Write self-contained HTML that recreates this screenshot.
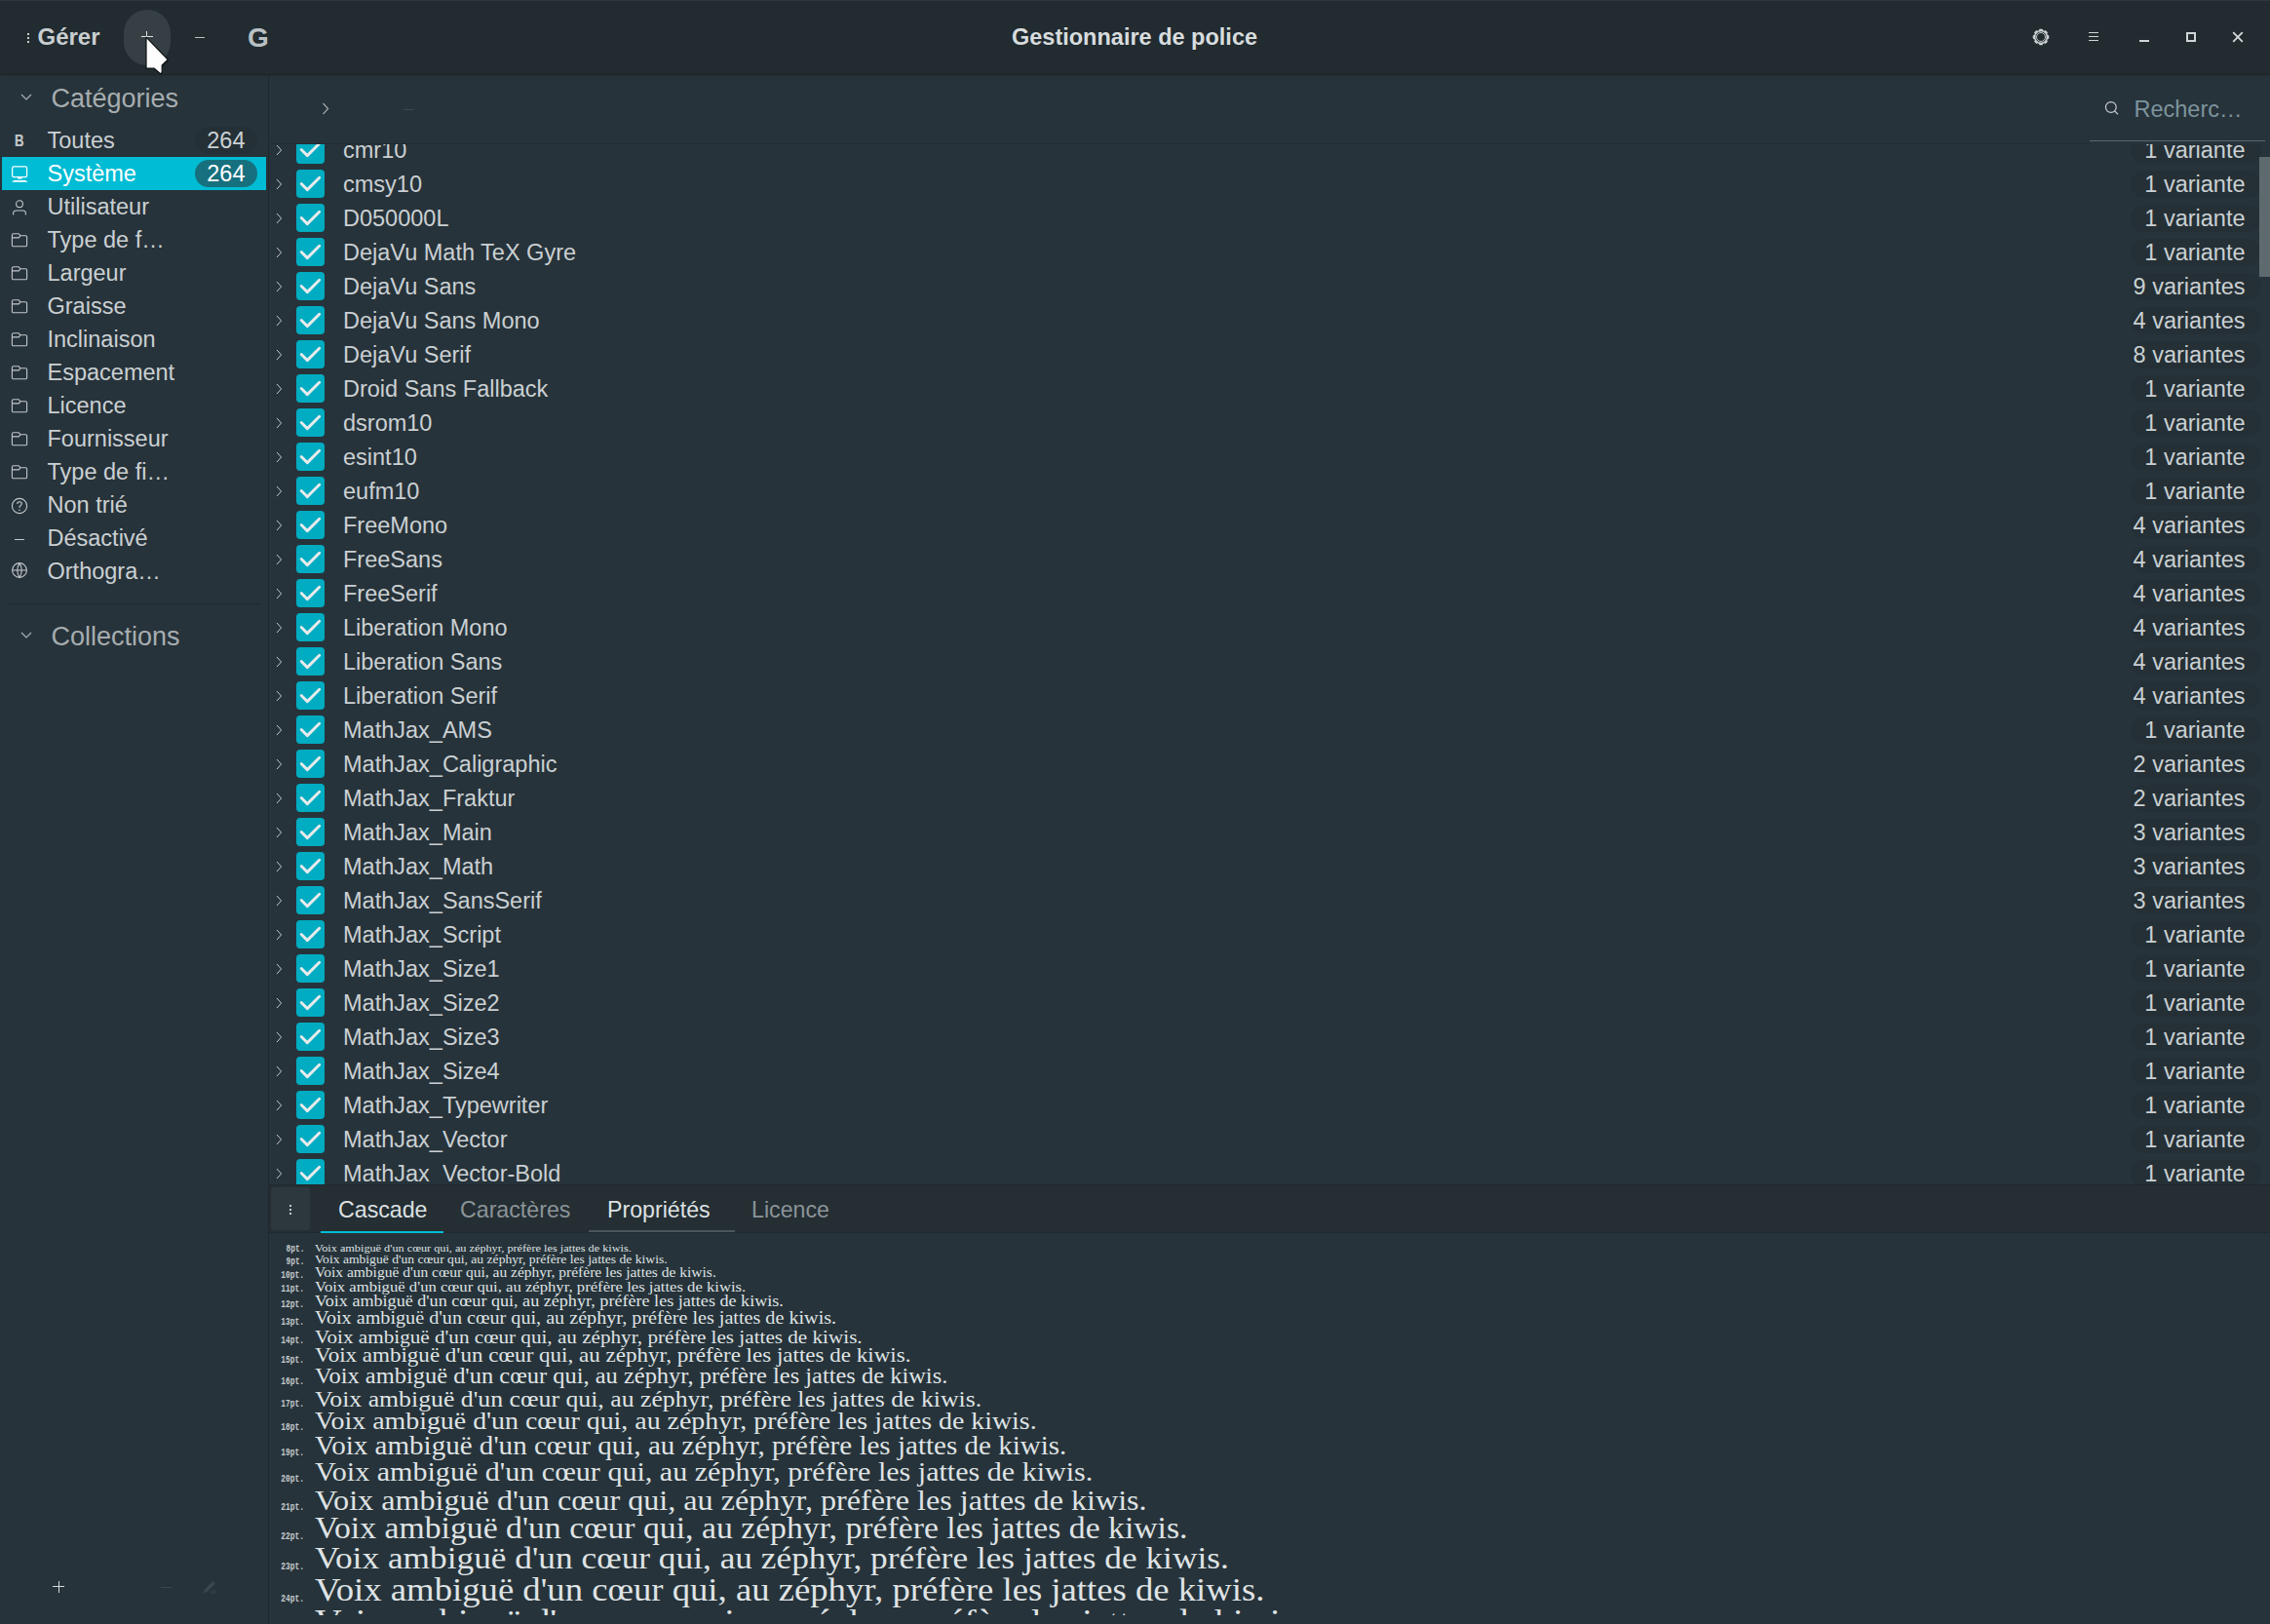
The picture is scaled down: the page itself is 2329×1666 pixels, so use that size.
<!DOCTYPE html>
<html><head><meta charset="utf-8"><title>Gestionnaire de police</title>
<style>
html,body{margin:0;padding:0;}
body{width:2329px;height:1666px;overflow:hidden;position:relative;background:#27333a;font-family:"Liberation Sans",sans-serif;}
.abs{position:absolute;}
.t{position:absolute;white-space:nowrap;}
.cb{width:29px;height:29px;border-radius:4px;background:#00acc1;}
.cb svg{display:block}
.pv{font-family:"Liberation Serif",serif;color:#dfe3e5;transform-origin:left;}
.lb{font-family:"Liberation Mono",monospace;font-size:11px;line-height:14px;color:#c3c9cc;font-weight:bold;transform:scaleX(0.72);transform-origin:right;}
</style></head><body>
<div class="abs" style="left:0;top:0;width:2329px;height:76px;background:#212b30"></div>
<div class="abs" style="left:0;top:0;width:2329px;height:1px;background:#2c363b"></div>
<div class="abs" style="left:0;top:76px;width:2329px;height:1px;background:#1d2529;box-shadow:0 1px 2px rgba(0,0,0,0.18)"></div>
<div class="abs" style="left:28px;top:34px;width:2px;height:2px;background:#c9cdd0"></div>
<div class="abs" style="left:28px;top:38px;width:2px;height:2px;background:#c9cdd0"></div>
<div class="abs" style="left:28px;top:42px;width:2px;height:2px;background:#c9cdd0"></div>
<div class="t " style="left:38.50px;top:21.18px;font-size:24px;line-height:34px;color:#c9ced1;font-family:'Liberation Sans';font-weight:bold;">Gérer</div>
<div class="abs" style="left:127px;top:10px;width:48px;height:57px;border-radius:24px;background:#353f44"></div>
<div class="abs" style="left:145px;top:37px;width:12px;height:1px;background:#e0e3e5"></div>
<div class="abs" style="left:150px;top:32px;width:1px;height:12px;background:#e0e3e5"></div>
<div class="abs" style="left:200px;top:38px;width:10px;height:1px;background:#b8bec1"></div>
<div class="t " style="left:254.00px;top:19.29px;font-size:28px;line-height:39px;color:#b9c0c4;font-family:'Liberation Sans';font-weight:bold;">G</div>
<div class="t " style="left:1164.00px;transform:translateX(-50%);top:21.65px;font-size:23.5px;line-height:33px;color:#d8dcde;font-family:'Liberation Sans';font-weight:bold;">Gestionnaire de police</div>
<svg class="abs" style="left:2084px;top:28px" width="20" height="20" viewBox="0 0 20 20"><path d="M8.10 3.37 L8.59 2.02 L11.41 2.02 L11.90 3.37 L13.35 3.97 L14.65 3.36 L16.64 5.35 L16.03 6.65 L16.63 8.10 L17.98 8.59 L17.98 11.41 L16.63 11.90 L16.03 13.35 L16.64 14.65 L14.65 16.64 L13.35 16.03 L11.90 16.63 L11.41 17.98 L8.59 17.98 L8.10 16.63 L6.65 16.03 L5.35 16.64 L3.36 14.65 L3.97 13.35 L3.37 11.90 L2.02 11.41 L2.02 8.59 L3.37 8.10 L3.97 6.65 L3.36 5.35 L5.35 3.36 L6.65 3.97 Z M10 4.1 A5.9 5.9 0 1 0 10 15.9 A5.9 5.9 0 1 0 10 4.1 Z" fill="#cdd2d5" fill-rule="evenodd" stroke="#cdd2d5" stroke-width="0.6" stroke-linejoin="round"/><circle cx="10" cy="10" r="4.5" fill="none" stroke="#cdd2d5" stroke-width="0.9"/></svg>
<div class="abs" style="left:2143px;top:33px;width:10px;height:1px;background:#cfd3d5"></div>
<div class="abs" style="left:2143px;top:37px;width:10px;height:1px;background:#cfd3d5"></div>
<div class="abs" style="left:2143px;top:41px;width:10px;height:1px;background:#cfd3d5"></div>
<div class="abs" style="left:2195px;top:41px;width:10px;height:2px;background:#d0d4d6"></div>
<div class="abs" style="left:2243px;top:33px;width:6px;height:6px;border:2px solid #d0d4d6"></div>
<svg class="abs" style="left:2290px;top:32px" width="12" height="12" viewBox="0 0 12 12"><path d="M1.2 1.2 L10.8 10.8 M10.8 1.2 L1.2 10.8" stroke="#d6dadc" stroke-width="1.8"/></svg>
<svg class="abs" style="left:146px;top:34px" width="30" height="46" viewBox="0 0 30 46"><path d="M4 4.2 L4 36 L12 36 L18.6 41.8 L20.2 40.4 L20.2 33 L26.2 27.2 Z" fill="#000" opacity="0.25" transform="translate(0.8,1.2)"/><path d="M4 4.2 L4 36 L12 36 L18.6 41.8 L20.2 40.4 L20.2 33 L26.2 27.2 Z" fill="#fdfdfd" stroke="#0d1214" stroke-width="1.2" stroke-linejoin="round"/></svg>
<div class="abs" style="left:275px;top:77px;width:1px;height:1589px;background:#1f292d"></div>
<svg class="abs" style="left:21px;top:96px" width="12" height="8" viewBox="0 0 12 8"><path d="M1 1 L6 6 L11 1" fill="none" stroke="#a9b0b3" stroke-width="1.2"/></svg>
<div class="t " style="left:52.50px;top:81.64px;font-size:27px;line-height:38px;color:#a6adb0;font-family:'Liberation Sans';font-weight:normal;">Catégories</div>
<div class="t " style="left:48.50px;top:128.15px;font-size:23.5px;line-height:33px;color:#cad0d3;font-family:'Liberation Sans';font-weight:normal;">Toutes</div>
<div class="abs" style="left:200px;top:130px;width:64px;height:28px;border-radius:14px;background:#253036"></div>
<div class="t " style="right:2077.50px;top:128.15px;font-size:23.5px;line-height:33px;color:#cad0d3;font-family:'Liberation Sans';font-weight:normal;">264</div>
<div class="t " style="left:14.60px;top:132.78px;font-size:16.5px;line-height:23px;color:#c3c8cb;font-family:'Liberation Sans';font-weight:bold;transform:scaleX(0.8);transform-origin:left;-webkit-text-stroke:0.2px #c3c8cb;">B</div>
<div class="abs" style="left:2px;top:161px;width:271px;height:34px;background:#00bcd4"></div>
<div class="abs" style="left:200px;top:164px;width:64px;height:28px;border-radius:14px;background:#17707e"></div>
<div class="t " style="left:48.50px;top:162.15px;font-size:23.5px;line-height:33px;color:#ffffff;font-family:'Liberation Sans';font-weight:normal;">Système</div>
<div class="t " style="right:2077.50px;top:162.15px;font-size:23.5px;line-height:33px;color:#ffffff;font-family:'Liberation Sans';font-weight:normal;">264</div>
<svg class="abs" style="left:11px;top:167.8px" width="19" height="20" viewBox="0 0 19 20"><g fill="none" stroke="#ffffff" stroke-width="1.2"><rect x="1.6" y="2.9" width="15" height="10.8" rx="1.6"/></g><rect x="7" y="14.2" width="4.6" height="1.4" fill="#fff"/><path d="M1.2 18.8 Q2 17 4 17 H14.6 Q16.6 17 17.4 18.8 Z" fill="#fff"/></svg>
<div class="t " style="left:48.50px;top:196.15px;font-size:23.5px;line-height:33px;color:#cad0d3;font-family:'Liberation Sans';font-weight:normal;">Utilisateur</div>
<svg class="abs" style="left:12px;top:204.60000000000002px" width="16" height="18" viewBox="0 0 16 18"><g fill="none" stroke="#c3c8cb" stroke-width="1.1" stroke-linecap="round"><circle cx="8" cy="4.2" r="3.4"/><path d="M1.6 15 V13.9 Q1.6 11 5 11 H11 Q14.4 11 14.4 13.9 V15"/></g></svg>
<div class="t " style="left:48.50px;top:230.15px;font-size:23.5px;line-height:33px;color:#cad0d3;font-family:'Liberation Sans';font-weight:normal;">Type de f…</div>
<svg class="abs" style="left:11px;top:238.60000000000002px" width="18" height="16" viewBox="0 0 18 16"><path d="M1.4 2.1 Q1.4 0.7 2.8 0.7 H7.9 L9.9 2.7 H15.2 Q16.6 2.7 16.6 4.1 V12.4 Q16.6 13.8 15.2 13.8 H2.8 Q1.4 13.8 1.4 12.4 Z M1.4 4.9 H8.3 L9.9 2.9" fill="none" stroke="#c3c8cb" stroke-width="1.1" stroke-linejoin="round"/></svg>
<div class="t " style="left:48.50px;top:264.15px;font-size:23.5px;line-height:33px;color:#cad0d3;font-family:'Liberation Sans';font-weight:normal;">Largeur</div>
<svg class="abs" style="left:11px;top:272.6px" width="18" height="16" viewBox="0 0 18 16"><path d="M1.4 2.1 Q1.4 0.7 2.8 0.7 H7.9 L9.9 2.7 H15.2 Q16.6 2.7 16.6 4.1 V12.4 Q16.6 13.8 15.2 13.8 H2.8 Q1.4 13.8 1.4 12.4 Z M1.4 4.9 H8.3 L9.9 2.9" fill="none" stroke="#c3c8cb" stroke-width="1.1" stroke-linejoin="round"/></svg>
<div class="t " style="left:48.50px;top:298.15px;font-size:23.5px;line-height:33px;color:#cad0d3;font-family:'Liberation Sans';font-weight:normal;">Graisse</div>
<svg class="abs" style="left:11px;top:306.6px" width="18" height="16" viewBox="0 0 18 16"><path d="M1.4 2.1 Q1.4 0.7 2.8 0.7 H7.9 L9.9 2.7 H15.2 Q16.6 2.7 16.6 4.1 V12.4 Q16.6 13.8 15.2 13.8 H2.8 Q1.4 13.8 1.4 12.4 Z M1.4 4.9 H8.3 L9.9 2.9" fill="none" stroke="#c3c8cb" stroke-width="1.1" stroke-linejoin="round"/></svg>
<div class="t " style="left:48.50px;top:332.15px;font-size:23.5px;line-height:33px;color:#cad0d3;font-family:'Liberation Sans';font-weight:normal;">Inclinaison</div>
<svg class="abs" style="left:11px;top:340.6px" width="18" height="16" viewBox="0 0 18 16"><path d="M1.4 2.1 Q1.4 0.7 2.8 0.7 H7.9 L9.9 2.7 H15.2 Q16.6 2.7 16.6 4.1 V12.4 Q16.6 13.8 15.2 13.8 H2.8 Q1.4 13.8 1.4 12.4 Z M1.4 4.9 H8.3 L9.9 2.9" fill="none" stroke="#c3c8cb" stroke-width="1.1" stroke-linejoin="round"/></svg>
<div class="t " style="left:48.50px;top:366.15px;font-size:23.5px;line-height:33px;color:#cad0d3;font-family:'Liberation Sans';font-weight:normal;">Espacement</div>
<svg class="abs" style="left:11px;top:374.6px" width="18" height="16" viewBox="0 0 18 16"><path d="M1.4 2.1 Q1.4 0.7 2.8 0.7 H7.9 L9.9 2.7 H15.2 Q16.6 2.7 16.6 4.1 V12.4 Q16.6 13.8 15.2 13.8 H2.8 Q1.4 13.8 1.4 12.4 Z M1.4 4.9 H8.3 L9.9 2.9" fill="none" stroke="#c3c8cb" stroke-width="1.1" stroke-linejoin="round"/></svg>
<div class="t " style="left:48.50px;top:400.15px;font-size:23.5px;line-height:33px;color:#cad0d3;font-family:'Liberation Sans';font-weight:normal;">Licence</div>
<svg class="abs" style="left:11px;top:408.6px" width="18" height="16" viewBox="0 0 18 16"><path d="M1.4 2.1 Q1.4 0.7 2.8 0.7 H7.9 L9.9 2.7 H15.2 Q16.6 2.7 16.6 4.1 V12.4 Q16.6 13.8 15.2 13.8 H2.8 Q1.4 13.8 1.4 12.4 Z M1.4 4.9 H8.3 L9.9 2.9" fill="none" stroke="#c3c8cb" stroke-width="1.1" stroke-linejoin="round"/></svg>
<div class="t " style="left:48.50px;top:434.15px;font-size:23.5px;line-height:33px;color:#cad0d3;font-family:'Liberation Sans';font-weight:normal;">Fournisseur</div>
<svg class="abs" style="left:11px;top:442.6px" width="18" height="16" viewBox="0 0 18 16"><path d="M1.4 2.1 Q1.4 0.7 2.8 0.7 H7.9 L9.9 2.7 H15.2 Q16.6 2.7 16.6 4.1 V12.4 Q16.6 13.8 15.2 13.8 H2.8 Q1.4 13.8 1.4 12.4 Z M1.4 4.9 H8.3 L9.9 2.9" fill="none" stroke="#c3c8cb" stroke-width="1.1" stroke-linejoin="round"/></svg>
<div class="t " style="left:48.50px;top:468.15px;font-size:23.5px;line-height:33px;color:#cad0d3;font-family:'Liberation Sans';font-weight:normal;">Type de fi…</div>
<svg class="abs" style="left:11px;top:476.6px" width="18" height="16" viewBox="0 0 18 16"><path d="M1.4 2.1 Q1.4 0.7 2.8 0.7 H7.9 L9.9 2.7 H15.2 Q16.6 2.7 16.6 4.1 V12.4 Q16.6 13.8 15.2 13.8 H2.8 Q1.4 13.8 1.4 12.4 Z M1.4 4.9 H8.3 L9.9 2.9" fill="none" stroke="#c3c8cb" stroke-width="1.1" stroke-linejoin="round"/></svg>
<div class="t " style="left:48.50px;top:502.15px;font-size:23.5px;line-height:33px;color:#cad0d3;font-family:'Liberation Sans';font-weight:normal;">Non trié</div>
<svg class="abs" style="left:11px;top:509.79999999999995px" width="18" height="18" viewBox="0 0 18 18"><g fill="none" stroke="#c3c8cb" stroke-width="1.1"><circle cx="9" cy="9" r="7.6"/><path d="M6.7 7 Q6.8 4.7 9 4.7 Q11.3 4.7 11.3 6.8 Q11.3 8.2 9.4 9.2 Q9 9.5 9 11"/></g><circle cx="9" cy="13.2" r="0.8" fill="#c3c8cb"/></svg>
<div class="t " style="left:48.50px;top:536.15px;font-size:23.5px;line-height:33px;color:#cad0d3;font-family:'Liberation Sans';font-weight:normal;">Désactivé</div>
<div class="abs" style="left:15px;top:552.8px;width:10px;height:1px;background:#c3c8cb"></div>
<div class="t " style="left:48.50px;top:570.15px;font-size:23.5px;line-height:33px;color:#cad0d3;font-family:'Liberation Sans';font-weight:normal;">Orthogra…</div>
<svg class="abs" style="left:11px;top:576.4px" width="18" height="18" viewBox="0 0 18 18"><g fill="none" stroke="#c3c8cb" stroke-width="1.1"><circle cx="9" cy="9" r="7.4"/><path d="M9 1.6 Q4.6 9 9 16.4 Q13.4 9 9 1.6 M1.6 9 H16.4"/></g></svg>
<div class="abs" style="left:8px;top:619px;width:259px;height:1px;background:#1f292d"></div>
<svg class="abs" style="left:21px;top:648px" width="12" height="8" viewBox="0 0 12 8"><path d="M1 1 L6 6 L11 1" fill="none" stroke="#a9b0b3" stroke-width="1.2"/></svg>
<div class="t " style="left:52.50px;top:633.64px;font-size:27px;line-height:38px;color:#a6adb0;font-family:'Liberation Sans';font-weight:normal;">Collections</div>
<div class="abs" style="left:54px;top:1627px;width:12px;height:1px;background:#d5d9db"></div>
<div class="abs" style="left:59.5px;top:1622px;width:1px;height:12px;background:#d5d9db"></div>
<div class="abs" style="left:165px;top:1628px;width:11px;height:1px;background:#3b474d"></div>
<svg class="abs" style="left:207px;top:1620px" width="16" height="16" viewBox="0 0 16 16"><path d="M1.5 14.5 L3 10.5 L11.5 2 L14 4.5 L5.5 13 Z" fill="#3b474d"/><path d="M9 14 H15 M10.5 12 H15" stroke="#3b474d" stroke-width="1"/></svg>
<svg class="abs" style="left:330px;top:105px" width="8" height="13" viewBox="0 0 8 13"><path d="M1.5 1 L6.5 6.5 L1.5 12" fill="none" stroke="#c3c8cb" stroke-width="1.1"/></svg>
<div class="abs" style="left:414px;top:112px;width:10px;height:1px;background:#3d494f"></div>
<svg class="abs" style="left:2159px;top:103px" width="16" height="16" viewBox="0 0 16 16"><g fill="none" stroke="#c9ced1" stroke-width="1.2"><circle cx="6.8" cy="7" r="5.4"/><path d="M10.6 10.9 L14 14.2"/></g></svg>
<div class="t " style="left:2189.50px;top:96.15px;font-size:23.5px;line-height:33px;color:#7d939d;font-family:'Liberation Sans';font-weight:normal;">Recherc…</div>
<div class="abs" style="left:2144px;top:144px;width:180px;height:1px;background:#5b676d"></div>
<div class="abs" style="left:276px;top:147px;width:1868px;height:1px;background:#222c31"></div>
<div class="abs" style="left:276px;top:148px;width:2053px;height:1068px;overflow:hidden"><svg class="abs" style="left:7.300000000000011px;top:0px" width="7" height="12" viewBox="0 0 7 12"><path d="M1 1 L5.6 6 L1 11" fill="none" stroke="#c3c8cb" stroke-width="1"/></svg>
<div class="abs cb" style="left:28px;top:-9px"><svg width="29" height="29" viewBox="0 0 29 29"><path d="M5.2 14.5 L11.3 20.6 L23.7 8.2" fill="none" stroke="#e9ebec" stroke-width="2.9" stroke-linecap="round" stroke-linejoin="round"/></svg></div>
<div class="t " style="left:76.00px;top:-10.15px;font-size:23.5px;line-height:33px;color:#cad0d3;font-family:'Liberation Sans';font-weight:normal;">cmr10</div>
<div class="abs" style="left:1910px;top:-8.5px;width:134px;height:28px;border-radius:14px;background:#253036"></div>
<div class="t" style="right:25.50px;top:-10.15px;font-size:23.5px;line-height:33px;color:#cad0d3">1 variante</div>
<svg class="abs" style="left:7.300000000000011px;top:35px" width="7" height="12" viewBox="0 0 7 12"><path d="M1 1 L5.6 6 L1 11" fill="none" stroke="#c3c8cb" stroke-width="1"/></svg>
<div class="abs cb" style="left:28px;top:26px"><svg width="29" height="29" viewBox="0 0 29 29"><path d="M5.2 14.5 L11.3 20.6 L23.7 8.2" fill="none" stroke="#e9ebec" stroke-width="2.9" stroke-linecap="round" stroke-linejoin="round"/></svg></div>
<div class="t " style="left:76.00px;top:24.85px;font-size:23.5px;line-height:33px;color:#cad0d3;font-family:'Liberation Sans';font-weight:normal;">cmsy10</div>
<div class="abs" style="left:1910px;top:26.5px;width:134px;height:28px;border-radius:14px;background:#253036"></div>
<div class="t" style="right:25.50px;top:24.85px;font-size:23.5px;line-height:33px;color:#cad0d3">1 variante</div>
<svg class="abs" style="left:7.300000000000011px;top:70px" width="7" height="12" viewBox="0 0 7 12"><path d="M1 1 L5.6 6 L1 11" fill="none" stroke="#c3c8cb" stroke-width="1"/></svg>
<div class="abs cb" style="left:28px;top:61px"><svg width="29" height="29" viewBox="0 0 29 29"><path d="M5.2 14.5 L11.3 20.6 L23.7 8.2" fill="none" stroke="#e9ebec" stroke-width="2.9" stroke-linecap="round" stroke-linejoin="round"/></svg></div>
<div class="t " style="left:76.00px;top:59.85px;font-size:23.5px;line-height:33px;color:#cad0d3;font-family:'Liberation Sans';font-weight:normal;">D050000L</div>
<div class="abs" style="left:1910px;top:61.5px;width:134px;height:28px;border-radius:14px;background:#253036"></div>
<div class="t" style="right:25.50px;top:59.85px;font-size:23.5px;line-height:33px;color:#cad0d3">1 variante</div>
<svg class="abs" style="left:7.300000000000011px;top:105px" width="7" height="12" viewBox="0 0 7 12"><path d="M1 1 L5.6 6 L1 11" fill="none" stroke="#c3c8cb" stroke-width="1"/></svg>
<div class="abs cb" style="left:28px;top:96px"><svg width="29" height="29" viewBox="0 0 29 29"><path d="M5.2 14.5 L11.3 20.6 L23.7 8.2" fill="none" stroke="#e9ebec" stroke-width="2.9" stroke-linecap="round" stroke-linejoin="round"/></svg></div>
<div class="t " style="left:76.00px;top:94.85px;font-size:23.5px;line-height:33px;color:#cad0d3;font-family:'Liberation Sans';font-weight:normal;">DejaVu Math TeX Gyre</div>
<div class="abs" style="left:1910px;top:96.5px;width:134px;height:28px;border-radius:14px;background:#253036"></div>
<div class="t" style="right:25.50px;top:94.85px;font-size:23.5px;line-height:33px;color:#cad0d3">1 variante</div>
<svg class="abs" style="left:7.300000000000011px;top:140px" width="7" height="12" viewBox="0 0 7 12"><path d="M1 1 L5.6 6 L1 11" fill="none" stroke="#c3c8cb" stroke-width="1"/></svg>
<div class="abs cb" style="left:28px;top:131px"><svg width="29" height="29" viewBox="0 0 29 29"><path d="M5.2 14.5 L11.3 20.6 L23.7 8.2" fill="none" stroke="#e9ebec" stroke-width="2.9" stroke-linecap="round" stroke-linejoin="round"/></svg></div>
<div class="t " style="left:76.00px;top:129.85px;font-size:23.5px;line-height:33px;color:#cad0d3;font-family:'Liberation Sans';font-weight:normal;">DejaVu Sans</div>
<div class="abs" style="left:1910px;top:131.5px;width:134px;height:28px;border-radius:14px;background:#253036"></div>
<div class="t" style="right:25.50px;top:129.85px;font-size:23.5px;line-height:33px;color:#cad0d3">9 variantes</div>
<svg class="abs" style="left:7.300000000000011px;top:175px" width="7" height="12" viewBox="0 0 7 12"><path d="M1 1 L5.6 6 L1 11" fill="none" stroke="#c3c8cb" stroke-width="1"/></svg>
<div class="abs cb" style="left:28px;top:166px"><svg width="29" height="29" viewBox="0 0 29 29"><path d="M5.2 14.5 L11.3 20.6 L23.7 8.2" fill="none" stroke="#e9ebec" stroke-width="2.9" stroke-linecap="round" stroke-linejoin="round"/></svg></div>
<div class="t " style="left:76.00px;top:164.85px;font-size:23.5px;line-height:33px;color:#cad0d3;font-family:'Liberation Sans';font-weight:normal;">DejaVu Sans Mono</div>
<div class="abs" style="left:1910px;top:166.5px;width:134px;height:28px;border-radius:14px;background:#253036"></div>
<div class="t" style="right:25.50px;top:164.85px;font-size:23.5px;line-height:33px;color:#cad0d3">4 variantes</div>
<svg class="abs" style="left:7.300000000000011px;top:210px" width="7" height="12" viewBox="0 0 7 12"><path d="M1 1 L5.6 6 L1 11" fill="none" stroke="#c3c8cb" stroke-width="1"/></svg>
<div class="abs cb" style="left:28px;top:201px"><svg width="29" height="29" viewBox="0 0 29 29"><path d="M5.2 14.5 L11.3 20.6 L23.7 8.2" fill="none" stroke="#e9ebec" stroke-width="2.9" stroke-linecap="round" stroke-linejoin="round"/></svg></div>
<div class="t " style="left:76.00px;top:199.85px;font-size:23.5px;line-height:33px;color:#cad0d3;font-family:'Liberation Sans';font-weight:normal;">DejaVu Serif</div>
<div class="abs" style="left:1910px;top:201.5px;width:134px;height:28px;border-radius:14px;background:#253036"></div>
<div class="t" style="right:25.50px;top:199.85px;font-size:23.5px;line-height:33px;color:#cad0d3">8 variantes</div>
<svg class="abs" style="left:7.300000000000011px;top:245px" width="7" height="12" viewBox="0 0 7 12"><path d="M1 1 L5.6 6 L1 11" fill="none" stroke="#c3c8cb" stroke-width="1"/></svg>
<div class="abs cb" style="left:28px;top:236px"><svg width="29" height="29" viewBox="0 0 29 29"><path d="M5.2 14.5 L11.3 20.6 L23.7 8.2" fill="none" stroke="#e9ebec" stroke-width="2.9" stroke-linecap="round" stroke-linejoin="round"/></svg></div>
<div class="t " style="left:76.00px;top:234.85px;font-size:23.5px;line-height:33px;color:#cad0d3;font-family:'Liberation Sans';font-weight:normal;">Droid Sans Fallback</div>
<div class="abs" style="left:1910px;top:236.5px;width:134px;height:28px;border-radius:14px;background:#253036"></div>
<div class="t" style="right:25.50px;top:234.85px;font-size:23.5px;line-height:33px;color:#cad0d3">1 variante</div>
<svg class="abs" style="left:7.300000000000011px;top:280px" width="7" height="12" viewBox="0 0 7 12"><path d="M1 1 L5.6 6 L1 11" fill="none" stroke="#c3c8cb" stroke-width="1"/></svg>
<div class="abs cb" style="left:28px;top:271px"><svg width="29" height="29" viewBox="0 0 29 29"><path d="M5.2 14.5 L11.3 20.6 L23.7 8.2" fill="none" stroke="#e9ebec" stroke-width="2.9" stroke-linecap="round" stroke-linejoin="round"/></svg></div>
<div class="t " style="left:76.00px;top:269.85px;font-size:23.5px;line-height:33px;color:#cad0d3;font-family:'Liberation Sans';font-weight:normal;">dsrom10</div>
<div class="abs" style="left:1910px;top:271.5px;width:134px;height:28px;border-radius:14px;background:#253036"></div>
<div class="t" style="right:25.50px;top:269.85px;font-size:23.5px;line-height:33px;color:#cad0d3">1 variante</div>
<svg class="abs" style="left:7.300000000000011px;top:315px" width="7" height="12" viewBox="0 0 7 12"><path d="M1 1 L5.6 6 L1 11" fill="none" stroke="#c3c8cb" stroke-width="1"/></svg>
<div class="abs cb" style="left:28px;top:306px"><svg width="29" height="29" viewBox="0 0 29 29"><path d="M5.2 14.5 L11.3 20.6 L23.7 8.2" fill="none" stroke="#e9ebec" stroke-width="2.9" stroke-linecap="round" stroke-linejoin="round"/></svg></div>
<div class="t " style="left:76.00px;top:304.85px;font-size:23.5px;line-height:33px;color:#cad0d3;font-family:'Liberation Sans';font-weight:normal;">esint10</div>
<div class="abs" style="left:1910px;top:306.5px;width:134px;height:28px;border-radius:14px;background:#253036"></div>
<div class="t" style="right:25.50px;top:304.85px;font-size:23.5px;line-height:33px;color:#cad0d3">1 variante</div>
<svg class="abs" style="left:7.300000000000011px;top:350px" width="7" height="12" viewBox="0 0 7 12"><path d="M1 1 L5.6 6 L1 11" fill="none" stroke="#c3c8cb" stroke-width="1"/></svg>
<div class="abs cb" style="left:28px;top:341px"><svg width="29" height="29" viewBox="0 0 29 29"><path d="M5.2 14.5 L11.3 20.6 L23.7 8.2" fill="none" stroke="#e9ebec" stroke-width="2.9" stroke-linecap="round" stroke-linejoin="round"/></svg></div>
<div class="t " style="left:76.00px;top:339.85px;font-size:23.5px;line-height:33px;color:#cad0d3;font-family:'Liberation Sans';font-weight:normal;">eufm10</div>
<div class="abs" style="left:1910px;top:341.5px;width:134px;height:28px;border-radius:14px;background:#253036"></div>
<div class="t" style="right:25.50px;top:339.85px;font-size:23.5px;line-height:33px;color:#cad0d3">1 variante</div>
<svg class="abs" style="left:7.300000000000011px;top:385px" width="7" height="12" viewBox="0 0 7 12"><path d="M1 1 L5.6 6 L1 11" fill="none" stroke="#c3c8cb" stroke-width="1"/></svg>
<div class="abs cb" style="left:28px;top:376px"><svg width="29" height="29" viewBox="0 0 29 29"><path d="M5.2 14.5 L11.3 20.6 L23.7 8.2" fill="none" stroke="#e9ebec" stroke-width="2.9" stroke-linecap="round" stroke-linejoin="round"/></svg></div>
<div class="t " style="left:76.00px;top:374.85px;font-size:23.5px;line-height:33px;color:#cad0d3;font-family:'Liberation Sans';font-weight:normal;">FreeMono</div>
<div class="abs" style="left:1910px;top:376.5px;width:134px;height:28px;border-radius:14px;background:#253036"></div>
<div class="t" style="right:25.50px;top:374.85px;font-size:23.5px;line-height:33px;color:#cad0d3">4 variantes</div>
<svg class="abs" style="left:7.300000000000011px;top:420px" width="7" height="12" viewBox="0 0 7 12"><path d="M1 1 L5.6 6 L1 11" fill="none" stroke="#c3c8cb" stroke-width="1"/></svg>
<div class="abs cb" style="left:28px;top:411px"><svg width="29" height="29" viewBox="0 0 29 29"><path d="M5.2 14.5 L11.3 20.6 L23.7 8.2" fill="none" stroke="#e9ebec" stroke-width="2.9" stroke-linecap="round" stroke-linejoin="round"/></svg></div>
<div class="t " style="left:76.00px;top:409.85px;font-size:23.5px;line-height:33px;color:#cad0d3;font-family:'Liberation Sans';font-weight:normal;">FreeSans</div>
<div class="abs" style="left:1910px;top:411.5px;width:134px;height:28px;border-radius:14px;background:#253036"></div>
<div class="t" style="right:25.50px;top:409.85px;font-size:23.5px;line-height:33px;color:#cad0d3">4 variantes</div>
<svg class="abs" style="left:7.300000000000011px;top:455px" width="7" height="12" viewBox="0 0 7 12"><path d="M1 1 L5.6 6 L1 11" fill="none" stroke="#c3c8cb" stroke-width="1"/></svg>
<div class="abs cb" style="left:28px;top:446px"><svg width="29" height="29" viewBox="0 0 29 29"><path d="M5.2 14.5 L11.3 20.6 L23.7 8.2" fill="none" stroke="#e9ebec" stroke-width="2.9" stroke-linecap="round" stroke-linejoin="round"/></svg></div>
<div class="t " style="left:76.00px;top:444.85px;font-size:23.5px;line-height:33px;color:#cad0d3;font-family:'Liberation Sans';font-weight:normal;">FreeSerif</div>
<div class="abs" style="left:1910px;top:446.5px;width:134px;height:28px;border-radius:14px;background:#253036"></div>
<div class="t" style="right:25.50px;top:444.85px;font-size:23.5px;line-height:33px;color:#cad0d3">4 variantes</div>
<svg class="abs" style="left:7.300000000000011px;top:490px" width="7" height="12" viewBox="0 0 7 12"><path d="M1 1 L5.6 6 L1 11" fill="none" stroke="#c3c8cb" stroke-width="1"/></svg>
<div class="abs cb" style="left:28px;top:481px"><svg width="29" height="29" viewBox="0 0 29 29"><path d="M5.2 14.5 L11.3 20.6 L23.7 8.2" fill="none" stroke="#e9ebec" stroke-width="2.9" stroke-linecap="round" stroke-linejoin="round"/></svg></div>
<div class="t " style="left:76.00px;top:479.85px;font-size:23.5px;line-height:33px;color:#cad0d3;font-family:'Liberation Sans';font-weight:normal;">Liberation Mono</div>
<div class="abs" style="left:1910px;top:481.5px;width:134px;height:28px;border-radius:14px;background:#253036"></div>
<div class="t" style="right:25.50px;top:479.85px;font-size:23.5px;line-height:33px;color:#cad0d3">4 variantes</div>
<svg class="abs" style="left:7.300000000000011px;top:525px" width="7" height="12" viewBox="0 0 7 12"><path d="M1 1 L5.6 6 L1 11" fill="none" stroke="#c3c8cb" stroke-width="1"/></svg>
<div class="abs cb" style="left:28px;top:516px"><svg width="29" height="29" viewBox="0 0 29 29"><path d="M5.2 14.5 L11.3 20.6 L23.7 8.2" fill="none" stroke="#e9ebec" stroke-width="2.9" stroke-linecap="round" stroke-linejoin="round"/></svg></div>
<div class="t " style="left:76.00px;top:514.85px;font-size:23.5px;line-height:33px;color:#cad0d3;font-family:'Liberation Sans';font-weight:normal;">Liberation Sans</div>
<div class="abs" style="left:1910px;top:516.5px;width:134px;height:28px;border-radius:14px;background:#253036"></div>
<div class="t" style="right:25.50px;top:514.85px;font-size:23.5px;line-height:33px;color:#cad0d3">4 variantes</div>
<svg class="abs" style="left:7.300000000000011px;top:560px" width="7" height="12" viewBox="0 0 7 12"><path d="M1 1 L5.6 6 L1 11" fill="none" stroke="#c3c8cb" stroke-width="1"/></svg>
<div class="abs cb" style="left:28px;top:551px"><svg width="29" height="29" viewBox="0 0 29 29"><path d="M5.2 14.5 L11.3 20.6 L23.7 8.2" fill="none" stroke="#e9ebec" stroke-width="2.9" stroke-linecap="round" stroke-linejoin="round"/></svg></div>
<div class="t " style="left:76.00px;top:549.85px;font-size:23.5px;line-height:33px;color:#cad0d3;font-family:'Liberation Sans';font-weight:normal;">Liberation Serif</div>
<div class="abs" style="left:1910px;top:551.5px;width:134px;height:28px;border-radius:14px;background:#253036"></div>
<div class="t" style="right:25.50px;top:549.85px;font-size:23.5px;line-height:33px;color:#cad0d3">4 variantes</div>
<svg class="abs" style="left:7.300000000000011px;top:595px" width="7" height="12" viewBox="0 0 7 12"><path d="M1 1 L5.6 6 L1 11" fill="none" stroke="#c3c8cb" stroke-width="1"/></svg>
<div class="abs cb" style="left:28px;top:586px"><svg width="29" height="29" viewBox="0 0 29 29"><path d="M5.2 14.5 L11.3 20.6 L23.7 8.2" fill="none" stroke="#e9ebec" stroke-width="2.9" stroke-linecap="round" stroke-linejoin="round"/></svg></div>
<div class="t " style="left:76.00px;top:584.85px;font-size:23.5px;line-height:33px;color:#cad0d3;font-family:'Liberation Sans';font-weight:normal;">MathJax_AMS</div>
<div class="abs" style="left:1910px;top:586.5px;width:134px;height:28px;border-radius:14px;background:#253036"></div>
<div class="t" style="right:25.50px;top:584.85px;font-size:23.5px;line-height:33px;color:#cad0d3">1 variante</div>
<svg class="abs" style="left:7.300000000000011px;top:630px" width="7" height="12" viewBox="0 0 7 12"><path d="M1 1 L5.6 6 L1 11" fill="none" stroke="#c3c8cb" stroke-width="1"/></svg>
<div class="abs cb" style="left:28px;top:621px"><svg width="29" height="29" viewBox="0 0 29 29"><path d="M5.2 14.5 L11.3 20.6 L23.7 8.2" fill="none" stroke="#e9ebec" stroke-width="2.9" stroke-linecap="round" stroke-linejoin="round"/></svg></div>
<div class="t " style="left:76.00px;top:619.85px;font-size:23.5px;line-height:33px;color:#cad0d3;font-family:'Liberation Sans';font-weight:normal;">MathJax_Caligraphic</div>
<div class="abs" style="left:1910px;top:621.5px;width:134px;height:28px;border-radius:14px;background:#253036"></div>
<div class="t" style="right:25.50px;top:619.85px;font-size:23.5px;line-height:33px;color:#cad0d3">2 variantes</div>
<svg class="abs" style="left:7.300000000000011px;top:665px" width="7" height="12" viewBox="0 0 7 12"><path d="M1 1 L5.6 6 L1 11" fill="none" stroke="#c3c8cb" stroke-width="1"/></svg>
<div class="abs cb" style="left:28px;top:656px"><svg width="29" height="29" viewBox="0 0 29 29"><path d="M5.2 14.5 L11.3 20.6 L23.7 8.2" fill="none" stroke="#e9ebec" stroke-width="2.9" stroke-linecap="round" stroke-linejoin="round"/></svg></div>
<div class="t " style="left:76.00px;top:654.85px;font-size:23.5px;line-height:33px;color:#cad0d3;font-family:'Liberation Sans';font-weight:normal;">MathJax_Fraktur</div>
<div class="abs" style="left:1910px;top:656.5px;width:134px;height:28px;border-radius:14px;background:#253036"></div>
<div class="t" style="right:25.50px;top:654.85px;font-size:23.5px;line-height:33px;color:#cad0d3">2 variantes</div>
<svg class="abs" style="left:7.300000000000011px;top:700px" width="7" height="12" viewBox="0 0 7 12"><path d="M1 1 L5.6 6 L1 11" fill="none" stroke="#c3c8cb" stroke-width="1"/></svg>
<div class="abs cb" style="left:28px;top:691px"><svg width="29" height="29" viewBox="0 0 29 29"><path d="M5.2 14.5 L11.3 20.6 L23.7 8.2" fill="none" stroke="#e9ebec" stroke-width="2.9" stroke-linecap="round" stroke-linejoin="round"/></svg></div>
<div class="t " style="left:76.00px;top:689.85px;font-size:23.5px;line-height:33px;color:#cad0d3;font-family:'Liberation Sans';font-weight:normal;">MathJax_Main</div>
<div class="abs" style="left:1910px;top:691.5px;width:134px;height:28px;border-radius:14px;background:#253036"></div>
<div class="t" style="right:25.50px;top:689.85px;font-size:23.5px;line-height:33px;color:#cad0d3">3 variantes</div>
<svg class="abs" style="left:7.300000000000011px;top:735px" width="7" height="12" viewBox="0 0 7 12"><path d="M1 1 L5.6 6 L1 11" fill="none" stroke="#c3c8cb" stroke-width="1"/></svg>
<div class="abs cb" style="left:28px;top:726px"><svg width="29" height="29" viewBox="0 0 29 29"><path d="M5.2 14.5 L11.3 20.6 L23.7 8.2" fill="none" stroke="#e9ebec" stroke-width="2.9" stroke-linecap="round" stroke-linejoin="round"/></svg></div>
<div class="t " style="left:76.00px;top:724.85px;font-size:23.5px;line-height:33px;color:#cad0d3;font-family:'Liberation Sans';font-weight:normal;">MathJax_Math</div>
<div class="abs" style="left:1910px;top:726.5px;width:134px;height:28px;border-radius:14px;background:#253036"></div>
<div class="t" style="right:25.50px;top:724.85px;font-size:23.5px;line-height:33px;color:#cad0d3">3 variantes</div>
<svg class="abs" style="left:7.300000000000011px;top:770px" width="7" height="12" viewBox="0 0 7 12"><path d="M1 1 L5.6 6 L1 11" fill="none" stroke="#c3c8cb" stroke-width="1"/></svg>
<div class="abs cb" style="left:28px;top:761px"><svg width="29" height="29" viewBox="0 0 29 29"><path d="M5.2 14.5 L11.3 20.6 L23.7 8.2" fill="none" stroke="#e9ebec" stroke-width="2.9" stroke-linecap="round" stroke-linejoin="round"/></svg></div>
<div class="t " style="left:76.00px;top:759.85px;font-size:23.5px;line-height:33px;color:#cad0d3;font-family:'Liberation Sans';font-weight:normal;">MathJax_SansSerif</div>
<div class="abs" style="left:1910px;top:761.5px;width:134px;height:28px;border-radius:14px;background:#253036"></div>
<div class="t" style="right:25.50px;top:759.85px;font-size:23.5px;line-height:33px;color:#cad0d3">3 variantes</div>
<svg class="abs" style="left:7.300000000000011px;top:805px" width="7" height="12" viewBox="0 0 7 12"><path d="M1 1 L5.6 6 L1 11" fill="none" stroke="#c3c8cb" stroke-width="1"/></svg>
<div class="abs cb" style="left:28px;top:796px"><svg width="29" height="29" viewBox="0 0 29 29"><path d="M5.2 14.5 L11.3 20.6 L23.7 8.2" fill="none" stroke="#e9ebec" stroke-width="2.9" stroke-linecap="round" stroke-linejoin="round"/></svg></div>
<div class="t " style="left:76.00px;top:794.85px;font-size:23.5px;line-height:33px;color:#cad0d3;font-family:'Liberation Sans';font-weight:normal;">MathJax_Script</div>
<div class="abs" style="left:1910px;top:796.5px;width:134px;height:28px;border-radius:14px;background:#253036"></div>
<div class="t" style="right:25.50px;top:794.85px;font-size:23.5px;line-height:33px;color:#cad0d3">1 variante</div>
<svg class="abs" style="left:7.300000000000011px;top:840px" width="7" height="12" viewBox="0 0 7 12"><path d="M1 1 L5.6 6 L1 11" fill="none" stroke="#c3c8cb" stroke-width="1"/></svg>
<div class="abs cb" style="left:28px;top:831px"><svg width="29" height="29" viewBox="0 0 29 29"><path d="M5.2 14.5 L11.3 20.6 L23.7 8.2" fill="none" stroke="#e9ebec" stroke-width="2.9" stroke-linecap="round" stroke-linejoin="round"/></svg></div>
<div class="t " style="left:76.00px;top:829.85px;font-size:23.5px;line-height:33px;color:#cad0d3;font-family:'Liberation Sans';font-weight:normal;">MathJax_Size1</div>
<div class="abs" style="left:1910px;top:831.5px;width:134px;height:28px;border-radius:14px;background:#253036"></div>
<div class="t" style="right:25.50px;top:829.85px;font-size:23.5px;line-height:33px;color:#cad0d3">1 variante</div>
<svg class="abs" style="left:7.300000000000011px;top:875px" width="7" height="12" viewBox="0 0 7 12"><path d="M1 1 L5.6 6 L1 11" fill="none" stroke="#c3c8cb" stroke-width="1"/></svg>
<div class="abs cb" style="left:28px;top:866px"><svg width="29" height="29" viewBox="0 0 29 29"><path d="M5.2 14.5 L11.3 20.6 L23.7 8.2" fill="none" stroke="#e9ebec" stroke-width="2.9" stroke-linecap="round" stroke-linejoin="round"/></svg></div>
<div class="t " style="left:76.00px;top:864.85px;font-size:23.5px;line-height:33px;color:#cad0d3;font-family:'Liberation Sans';font-weight:normal;">MathJax_Size2</div>
<div class="abs" style="left:1910px;top:866.5px;width:134px;height:28px;border-radius:14px;background:#253036"></div>
<div class="t" style="right:25.50px;top:864.85px;font-size:23.5px;line-height:33px;color:#cad0d3">1 variante</div>
<svg class="abs" style="left:7.300000000000011px;top:910px" width="7" height="12" viewBox="0 0 7 12"><path d="M1 1 L5.6 6 L1 11" fill="none" stroke="#c3c8cb" stroke-width="1"/></svg>
<div class="abs cb" style="left:28px;top:901px"><svg width="29" height="29" viewBox="0 0 29 29"><path d="M5.2 14.5 L11.3 20.6 L23.7 8.2" fill="none" stroke="#e9ebec" stroke-width="2.9" stroke-linecap="round" stroke-linejoin="round"/></svg></div>
<div class="t " style="left:76.00px;top:899.85px;font-size:23.5px;line-height:33px;color:#cad0d3;font-family:'Liberation Sans';font-weight:normal;">MathJax_Size3</div>
<div class="abs" style="left:1910px;top:901.5px;width:134px;height:28px;border-radius:14px;background:#253036"></div>
<div class="t" style="right:25.50px;top:899.85px;font-size:23.5px;line-height:33px;color:#cad0d3">1 variante</div>
<svg class="abs" style="left:7.300000000000011px;top:945px" width="7" height="12" viewBox="0 0 7 12"><path d="M1 1 L5.6 6 L1 11" fill="none" stroke="#c3c8cb" stroke-width="1"/></svg>
<div class="abs cb" style="left:28px;top:936px"><svg width="29" height="29" viewBox="0 0 29 29"><path d="M5.2 14.5 L11.3 20.6 L23.7 8.2" fill="none" stroke="#e9ebec" stroke-width="2.9" stroke-linecap="round" stroke-linejoin="round"/></svg></div>
<div class="t " style="left:76.00px;top:934.85px;font-size:23.5px;line-height:33px;color:#cad0d3;font-family:'Liberation Sans';font-weight:normal;">MathJax_Size4</div>
<div class="abs" style="left:1910px;top:936.5px;width:134px;height:28px;border-radius:14px;background:#253036"></div>
<div class="t" style="right:25.50px;top:934.85px;font-size:23.5px;line-height:33px;color:#cad0d3">1 variante</div>
<svg class="abs" style="left:7.300000000000011px;top:980px" width="7" height="12" viewBox="0 0 7 12"><path d="M1 1 L5.6 6 L1 11" fill="none" stroke="#c3c8cb" stroke-width="1"/></svg>
<div class="abs cb" style="left:28px;top:971px"><svg width="29" height="29" viewBox="0 0 29 29"><path d="M5.2 14.5 L11.3 20.6 L23.7 8.2" fill="none" stroke="#e9ebec" stroke-width="2.9" stroke-linecap="round" stroke-linejoin="round"/></svg></div>
<div class="t " style="left:76.00px;top:969.85px;font-size:23.5px;line-height:33px;color:#cad0d3;font-family:'Liberation Sans';font-weight:normal;">MathJax_Typewriter</div>
<div class="abs" style="left:1910px;top:971.5px;width:134px;height:28px;border-radius:14px;background:#253036"></div>
<div class="t" style="right:25.50px;top:969.85px;font-size:23.5px;line-height:33px;color:#cad0d3">1 variante</div>
<svg class="abs" style="left:7.300000000000011px;top:1015px" width="7" height="12" viewBox="0 0 7 12"><path d="M1 1 L5.6 6 L1 11" fill="none" stroke="#c3c8cb" stroke-width="1"/></svg>
<div class="abs cb" style="left:28px;top:1006px"><svg width="29" height="29" viewBox="0 0 29 29"><path d="M5.2 14.5 L11.3 20.6 L23.7 8.2" fill="none" stroke="#e9ebec" stroke-width="2.9" stroke-linecap="round" stroke-linejoin="round"/></svg></div>
<div class="t " style="left:76.00px;top:1004.85px;font-size:23.5px;line-height:33px;color:#cad0d3;font-family:'Liberation Sans';font-weight:normal;">MathJax_Vector</div>
<div class="abs" style="left:1910px;top:1006.5px;width:134px;height:28px;border-radius:14px;background:#253036"></div>
<div class="t" style="right:25.50px;top:1004.85px;font-size:23.5px;line-height:33px;color:#cad0d3">1 variante</div>
<svg class="abs" style="left:7.300000000000011px;top:1050px" width="7" height="12" viewBox="0 0 7 12"><path d="M1 1 L5.6 6 L1 11" fill="none" stroke="#c3c8cb" stroke-width="1"/></svg>
<div class="abs cb" style="left:28px;top:1041px"><svg width="29" height="29" viewBox="0 0 29 29"><path d="M5.2 14.5 L11.3 20.6 L23.7 8.2" fill="none" stroke="#e9ebec" stroke-width="2.9" stroke-linecap="round" stroke-linejoin="round"/></svg></div>
<div class="t " style="left:76.00px;top:1039.85px;font-size:23.5px;line-height:33px;color:#cad0d3;font-family:'Liberation Sans';font-weight:normal;">MathJax_Vector-Bold</div>
<div class="abs" style="left:1910px;top:1041.5px;width:134px;height:28px;border-radius:14px;background:#253036"></div>
<div class="t" style="right:25.50px;top:1039.85px;font-size:23.5px;line-height:33px;color:#cad0d3">1 variante</div></div>
<div class="abs" style="left:2318px;top:161px;width:11px;height:123px;background:#5f6a6f"></div>
<div class="abs" style="left:276px;top:1215px;width:2053px;height:1px;background:#1e272b"></div>
<div class="abs" style="left:276px;top:1216px;width:2053px;height:48px;background:#242e33"></div>
<div class="abs" style="left:276px;top:1264px;width:2053px;height:1px;background:#20292e"></div>
<div class="abs" style="left:278px;top:1218px;width:40px;height:44px;border-radius:3px;background:#2d383e"></div>
<div class="abs" style="left:297px;top:1236px;width:2px;height:2px;background:#c3c8cb"></div>
<div class="abs" style="left:297px;top:1240px;width:2px;height:2px;background:#c3c8cb"></div>
<div class="abs" style="left:297px;top:1244px;width:2px;height:2px;background:#c3c8cb"></div>
<div class="t " style="left:347.00px;top:1225.26px;font-size:23.2px;line-height:32px;color:#dde1e3;font-family:'Liberation Sans';font-weight:normal;">Cascade</div>
<div class="t " style="left:472.00px;top:1225.26px;font-size:23.2px;line-height:32px;color:#8b9498;font-family:'Liberation Sans';font-weight:normal;">Caractères</div>
<div class="t " style="left:623.00px;top:1225.26px;font-size:23.2px;line-height:32px;color:#dde1e3;font-family:'Liberation Sans';font-weight:normal;">Propriétés</div>
<div class="t " style="left:771.00px;top:1225.26px;font-size:23.2px;line-height:32px;color:#8b9498;font-family:'Liberation Sans';font-weight:normal;">Licence</div>
<div class="abs" style="left:329px;top:1262.6px;width:126px;height:2.6px;background:#00bcd4"></div>
<div class="abs" style="left:604px;top:1262px;width:150px;height:2px;background:#4a555b"></div>
<div class="abs" style="left:276px;top:1265px;width:2053px;height:392px;overflow:hidden"><div class="t lb" style="right:2017.0px;top:8.77px">8pt.</div>
<div class="t pv" style="left:47px;top:7.64px;font-size:11.20px;line-height:14.56px;transform:scaleX(1.0930)">Voix ambiguë d'un cœur qui, au zéphyr, préfère les jattes de kiwis.</div>
<div class="t lb" style="right:2017.0px;top:21.67px">9pt.</div>
<div class="t pv" style="left:47px;top:19.16px;font-size:12.60px;line-height:16.38px;transform:scaleX(1.0812)">Voix ambiguë d'un cœur qui, au zéphyr, préfère les jattes de kiwis.</div>
<div class="t lb" style="right:2017.0px;top:35.57px">10pt.</div>
<div class="t pv" style="left:47px;top:31.67px;font-size:14.00px;line-height:18.20px;transform:scaleX(1.1074)">Voix ambiguë d'un cœur qui, au zéphyr, préfère les jattes de kiwis.</div>
<div class="t lb" style="right:2017.0px;top:50.07px">11pt.</div>
<div class="t pv" style="left:47px;top:44.79px;font-size:15.40px;line-height:20.02px;transform:scaleX(1.0819)">Voix ambiguë d'un cœur qui, au zéphyr, préfère les jattes de kiwis.</div>
<div class="t lb" style="right:2017.0px;top:65.57px">12pt.</div>
<div class="t pv" style="left:47px;top:58.91px;font-size:16.80px;line-height:21.84px;transform:scaleX(1.0789)">Voix ambiguë d'un cœur qui, au zéphyr, préfère les jattes de kiwis.</div>
<div class="t lb" style="right:2017.0px;top:83.87px">13pt.</div>
<div class="t pv" style="left:47px;top:75.83px;font-size:18.20px;line-height:23.66px;transform:scaleX(1.1078)">Voix ambiguë d'un cœur qui, au zéphyr, préfère les jattes de kiwis.</div>
<div class="t lb" style="right:2017.0px;top:103.07px">14pt.</div>
<div class="t pv" style="left:47px;top:93.64px;font-size:19.60px;line-height:25.48px;transform:scaleX(1.0793)">Voix ambiguë d'un cœur qui, au zéphyr, préfère les jattes de kiwis.</div>
<div class="t lb" style="right:2017.0px;top:123.27px">15pt.</div>
<div class="t pv" style="left:47px;top:112.46px;font-size:21.00px;line-height:27.30px;transform:scaleX(1.0962)">Voix ambiguë d'un cœur qui, au zéphyr, préfère les jattes de kiwis.</div>
<div class="t lb" style="right:2017.0px;top:144.67px">16pt.</div>
<div class="t pv" style="left:47px;top:132.48px;font-size:22.40px;line-height:29.12px;transform:scaleX(1.0918)">Voix ambiguë d'un cœur qui, au zéphyr, préfère les jattes de kiwis.</div>
<div class="t lb" style="right:2017.0px;top:168.27px">17pt.</div>
<div class="t pv" style="left:47px;top:154.70px;font-size:23.80px;line-height:30.94px;transform:scaleX(1.0825)">Voix ambiguë d'un cœur qui, au zéphyr, préfère les jattes de kiwis.</div>
<div class="t lb" style="right:2017.0px;top:191.77px">18pt.</div>
<div class="t pv" style="left:47px;top:176.82px;font-size:25.20px;line-height:32.76px;transform:scaleX(1.1072)">Voix ambiguë d'un cœur qui, au zéphyr, préfère les jattes de kiwis.</div>
<div class="t lb" style="right:2017.0px;top:217.57px">19pt.</div>
<div class="t pv" style="left:47px;top:201.23px;font-size:26.60px;line-height:34.58px;transform:scaleX(1.0921)">Voix ambiguë d'un cœur qui, au zéphyr, préfère les jattes de kiwis.</div>
<div class="t lb" style="right:2017.0px;top:244.67px">20pt.</div>
<div class="t pv" style="left:47px;top:226.95px;font-size:28.00px;line-height:36.40px;transform:scaleX(1.0735)">Voix ambiguë d'un cœur qui, au zéphyr, préfère les jattes de kiwis.</div>
<div class="t lb" style="right:2017.0px;top:274.07px">21pt.</div>
<div class="t pv" style="left:47px;top:254.97px;font-size:29.40px;line-height:38.22px;transform:scaleX(1.0936)">Voix ambiguë d'un cœur qui, au zéphyr, préfère les jattes de kiwis.</div>
<div class="t lb" style="right:2017.0px;top:303.87px">22pt.</div>
<div class="t pv" style="left:47px;top:283.38px;font-size:30.80px;line-height:40.04px;transform:scaleX(1.0949)">Voix ambiguë d'un cœur qui, au zéphyr, préfère les jattes de kiwis.</div>
<div class="t lb" style="right:2017.0px;top:334.77px">23pt.</div>
<div class="t pv" style="left:47px;top:312.90px;font-size:32.20px;line-height:41.86px;transform:scaleX(1.0970)">Voix ambiguë d'un cœur qui, au zéphyr, préfère les jattes de kiwis.</div>
<div class="t lb" style="right:2017.0px;top:367.67px">24pt.</div>
<div class="t pv" style="left:47px;top:344.42px;font-size:33.60px;line-height:43.68px;transform:scaleX(1.0927)">Voix ambiguë d'un cœur qui, au zéphyr, préfère les jattes de kiwis.</div>
<div class="t lb" style="right:2017.0px;top:401.57px">25pt.</div>
<div class="t pv" style="left:47px;top:376.94px;font-size:35.00px;line-height:45.50px;transform:scaleX(1.0921)">Voix ambiguë d'un cœur qui, au zéphyr, préfère les jattes de kiwis.</div></div>
</body></html>
